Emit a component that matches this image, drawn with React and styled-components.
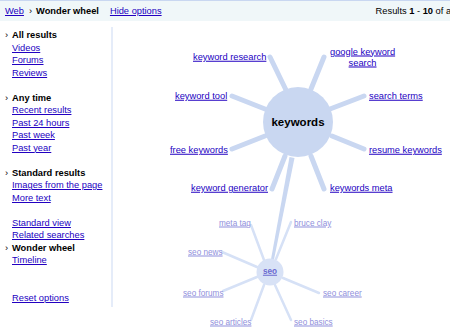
import React from 'react';
import styled, { createGlobalStyle } from 'styled-components';

// wheel canvas origin in page coordinates
const OX = 113;
const OY = 21;

const mainLinks = [
  { text: 'keyword research', x: 193, y: 57 },
  { text: 'keyword tool', x: 175, y: 96 },
  { text: 'search terms', x: 369, y: 96 },
  { text: 'free keywords', x: 170, y: 150 },
  { text: 'resume keywords', x: 369, y: 150 },
  { text: 'keyword generator', x: 191, y: 188 },
  { text: 'keywords meta', x: 330, y: 188 },
];

const seoLinks = [
  { text: 'meta tag', x: 219, y: 223 },
  { text: 'bruce clay', x: 294, y: 223 },
  { text: 'seo news', x: 188, y: 252 },
  { text: 'seo forums', x: 183, y: 293 },
  { text: 'seo career', x: 323, y: 293 },
  { text: 'seo articles', x: 210, y: 322 },
  { text: 'seo basics', x: 294, y: 322 },
];

const mainSpokes = [
  [270, 57, 286, 90],
  [324, 57, 311, 89],
  [232, 96, 265, 109],
  [364, 96, 330, 109],
  [232, 149, 265, 136],
  [364, 149, 332, 136],
  [272, 189, 285, 156],
  [324, 189, 311, 156],
];

const seoSpokes = [
  [251, 225, 264, 260],
  [291, 222, 276, 259],
  [222, 252, 257, 267],
  [223, 291, 257, 277],
  [319, 293, 283, 278],
  [251, 320, 264, 285],
  [291, 320, 275, 285],
];

const GlobalStyle = createGlobalStyle`
  html, body {
    margin: 0;
    padding: 0;
    background: #fff;
    overflow: hidden;
  }
  body {
    font-family: "Liberation Sans", Arial, sans-serif;
    font-size: 9.3px;
    line-height: 12.5px;
    color: #000;
  }
`;

const Page = styled.div`
  width: 450px;
  height: 333px;
  overflow: hidden;
`;

const TopBar = styled.div`
  display: flex;
  align-items: center;
  height: 20px;
  border-top: 1px solid #c9d7f1;
  background: #f0f7f9;
  padding-left: 5px;
  white-space: nowrap;
`;

const Link = styled.a`
  color: #2200c1;
  text-decoration: underline;
  cursor: pointer;
`;

const Crumb = styled.span`
  font-weight: bold;
  &::before {
    content: '›';
    font-weight: normal;
    margin: 0 4px 0 5px;
  }
`;

const HideLink = styled(Link)`
  margin-left: 11px;
`;

const Results = styled.span`
  margin-left: 214px;
  flex-shrink: 0;
  b { font-weight: bold; }
`;

const Body = styled.div`
  display: flex;
  align-items: flex-start;
`;

const Sidebar = styled.div`
  width: 99px;
  height: 278px;
  margin-top: 6px;
  padding: 2px 0 0 12px;
  border-right: 2px solid #e5ecf9;
  flex-shrink: 0;
`;

const Group = styled.div`
  display: flex;
  flex-direction: column;
  align-items: flex-start;
  margin-bottom: ${p => (p.$wide ? '25px' : '12.5px')};
`;

const Current = styled.span`
  font-weight: bold;
  &::before {
    content: '›';
    font-weight: normal;
    display: inline-block;
    width: 7px;
    margin-left: -7px;
  }
`;

const Canvas = styled.div`
  position: relative;
  flex: 1;
  height: 312px;
`;

const Spokes = styled.svg`
  position: absolute;
  left: 0;
  top: 0;
`;

const Node = styled(Link)`
  position: absolute;
  white-space: nowrap;
  transform: translateY(-50%);
  font-size: ${p => (p.$faded ? '8.2px' : '9.3px')};
  line-height: ${p => (p.$faded ? '11px' : '12.5px')};
  color: ${p => (p.$faded ? '#8f8fdc' : '#2200c1')};
`;

const TwoLine = styled(Node)`
  display: flex;
  flex-direction: column;
  align-items: center;
  line-height: 11.5px;
`;

const Hub = styled.span`
  position: absolute;
  transform: translate(-50%, -50%);
  font-weight: bold;
  font-size: 11.5px;
`;

const SeoHub = styled(Link)`
  position: absolute;
  transform: translate(-50%, -50%);
  font-weight: bold;
  font-size: 8.2px;
  color: #6a6ad0;
`;

const line = (s, i, w, c) => (
  <line key={i} x1={s[0] - OX} y1={s[1] - OY} x2={s[2] - OX} y2={s[3] - OY}
    stroke={c} strokeWidth={w} strokeLinecap="round" />
);

const Wheel = () => (
  <Canvas>
    <Spokes width="337" height="312">
      {seoSpokes.map((s, i) => line(s, i, 2.5, '#d6e1f6'))}
      <polygon
        points={`${289.5 - OX},${157 - OY} ${294.5 - OX},${158 - OY} ${273.5 - OX},${262 - OY} ${270.5 - OX},${262 - OY}`}
        fill="#c9d7f1"
      />
      <circle cx={270 - OX} cy={272 - OY} r="13.5" fill="#d8e2f6" />
      {mainSpokes.map((s, i) => line(s, i, 5, '#c9d7f1'))}
      <circle cx={298 - OX} cy={122 - OY} r="35" fill="#c9d7f1" />
    </Spokes>
    <Hub style={{ left: 298 - OX, top: 122 - OY }}>keywords</Hub>
    <SeoHub style={{ left: 270 - OX, top: 272 - OY }}>seo</SeoHub>
    {mainLinks.map(l => (
      <Node key={l.text} style={{ left: l.x - OX, top: l.y - OY }}>{l.text}</Node>
    ))}
    <TwoLine style={{ left: 330 - OX, top: 57.5 - OY }}>
      <span>google keyword</span>
      <span>search</span>
    </TwoLine>
    {seoLinks.map(l => (
      <Node $faded key={l.text} style={{ left: l.x - OX, top: l.y - OY }}>{l.text}</Node>
    ))}
  </Canvas>
);

export default function App() {
  return (
    <Page>
      <GlobalStyle />
      <TopBar>
        <Link>Web</Link>
        <Crumb>Wonder wheel</Crumb>
        <HideLink>Hide options</HideLink>
        <Results>Results <b>1</b> - <b>10</b> of about <b>65,100,000</b> for <b>keywords</b></Results>
      </TopBar>
      <Body>
        <Sidebar>
          <Group>
            <Current>All results</Current>
            <Link>Videos</Link>
            <Link>Forums</Link>
            <Link>Reviews</Link>
          </Group>
          <Group>
            <Current>Any time</Current>
            <Link>Recent results</Link>
            <Link>Past 24 hours</Link>
            <Link>Past week</Link>
            <Link>Past year</Link>
          </Group>
          <Group>
            <Current>Standard results</Current>
            <Link>Images from the page</Link>
            <Link>More text</Link>
          </Group>
          <Group $wide>
            <Link>Standard view</Link>
            <Link>Related searches</Link>
            <Current>Wonder wheel</Current>
            <Link>Timeline</Link>
          </Group>
          <Group>
            <Link>Reset options</Link>
          </Group>
        </Sidebar>
        <Wheel />
      </Body>
    </Page>
  );
}
